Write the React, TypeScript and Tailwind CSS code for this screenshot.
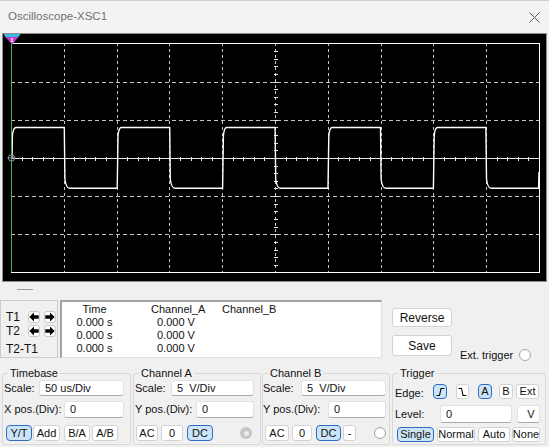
import clsx from "clsx";
import type { ReactNode } from "react";

// plot geometry, in page pixels
const X0 = 11;
const X1 = 539;
const Y0 = 43.3;
const Y1 = 272.5;
const DX = (X1 - X0) / 10;
const DY = (Y1 - Y0) / 6;
const CY = (Y0 + Y1) / 2;
const HI = 127.5;
const LO = 188.3;

const wavePath = () => {
	let d = `M12 ${CY} L12.4 136 Q13.2 ${HI} 16 ${HI}`;
	for (let k = 0; k < 5; k++) {
		const r = 11.8 + 105.4 * k;
		const f = r + 52.5;
		if (k > 0) d += ` L${r} ${LO} L${r + 0.8} 136 Q${r + 1.6} ${HI} ${r + 4} ${HI}`;
		d += ` L${f} ${HI} L${f + 0.6} 179 Q${f + 1.6} ${LO} ${f + 5.5} ${LO}`;
	}
	d += ` L538.6 ${LO} L539 172`;
	return d;
};

const Scope = () => {
	const px = (v: number) => Math.round(v) + 0.5;
	const cx = px(X0 + 5 * DX);
	const cyy = px(CY);
	const hTicks = Array.from({ length: 51 }, (_, i) => px(X0 + (i * DX) / 5));
	const vTicks = Array.from({ length: 31 }, (_, i) => px(Y0 + (i * DY) / 5));

	return (
		<svg width="543" height="247" viewBox="3 34 543 247" className="block">
			<g stroke="#c4c4c4" strokeWidth="1" shapeRendering="crispEdges">
				{Array.from({ length: 9 }, (_, i) => (
					<line key={`v${i}`} x1={px(X0 + (i + 1) * DX)} x2={px(X0 + (i + 1) * DX)} y1={Y0} y2={Y1} strokeDasharray="3 3" />
				))}
				{[1, 2, 4, 5].map((j) => (
					<line key={`h${j}`} x1={X0} x2={X1} y1={px(Y0 + j * DY)} y2={px(Y0 + j * DY)} strokeDasharray="4 3" />
				))}
			</g>
			<g stroke="#e6e6e6" strokeWidth="1" shapeRendering="crispEdges">
				<line x1={X0} x2={X1} y1={cyy} y2={cyy} />
				{hTicks.map((t) => (
					<line key={`ht${t}`} x1={t} x2={t} y1={cyy - 1.5} y2={cyy + 2.5} />
				))}
				{vTicks.map((t) => (
					<line key={`vt${t}`} x1={cx - 2} x2={cx + 2} y1={t} y2={t} />
				))}
			</g>
			<rect x={px(X0)} y={px(Y0)} width={Math.round(X1 - X0)} height={Math.round(Y1 - Y0)} fill="none" stroke="#ffffff" strokeWidth="1" shapeRendering="crispEdges" />
			<path d={wavePath()} fill="none" stroke="#ffffff" strokeWidth="1.4" />
			<line x1="11.5" x2="11.5" y1="43" y2="272" stroke="#3db54a" strokeWidth="1" shapeRendering="crispEdges" />
			<circle cx="11.5" cy={CY} r="3.2" fill="none" stroke="#9d8aae" strokeWidth="1" />
			<line x1="7.5" x2="15.5" y1={CY} y2={CY} stroke="#9d8aae" strokeWidth="1" />
			<polygon points="3.5,34 20.5,34 18.6,37 5.4,37" fill="#3cb8dc" />
			<polygon points="5.4,37 18.6,37 12,44.5" fill="#c23ac4" />
			<text x="12" y="41.8" fontSize="6" fill="#ffffff" textAnchor="middle" fontFamily="Liberation Sans, sans-serif" fontWeight="bold">
				1
			</text>
		</svg>
	);
};

type BtnProps = { children: ReactNode; on?: boolean; className?: string };

const Btn = ({ children, on, className }: BtnProps) => (
	<div
		className={clsx(
			"flex items-center justify-center border text-[11px] leading-none",
			on ? "bg-[#cce4f7] border-[#2d6cc0] rounded-[4px]" : "bg-white border-[#d3d3d3] rounded-[3px]",
			className,
		)}>
		{children}
	</div>
);

const Field = ({ children, className }: { children: ReactNode; className?: string }) => (
	<div className={clsx("flex items-center bg-white border border-[#e2e2e2] border-b-[#a9a9a9] rounded-[3px] pl-[5px] text-[11px] whitespace-pre", className)}>
		{children}
	</div>
);

const Radio = ({ disabled, className }: { disabled?: boolean; className?: string }) =>
	disabled ? (
		<div className={clsx("w-[12px] h-[12px] rounded-full bg-[#c5c5c5] flex items-center justify-center", className)}>
			<div className="w-[5px] h-[5px] rounded-full bg-[#ededed]" />
		</div>
	) : (
		<div className={clsx("w-[12px] h-[12px] rounded-full bg-white border border-[#a3a3a3]", className)} />
	);

const Arrow = ({ left }: { left?: boolean }) => (
	<div className="w-[12px] h-[12px] bg-white border border-[#c9c9c9] rounded-[3px] flex items-center justify-center">
		<svg width="10" height="10" viewBox="0 0 10 10">
			<path d={left ? "M0.3 5 L5 0.5 V3.3 H9.7 V6.7 H5 V9.5 Z" : "M9.7 5 L5 0.5 V3.3 H0.3 V6.7 H5 V9.5 Z"} fill="#000" />
		</svg>
	</div>
);

const Edge = ({ falling }: { falling?: boolean }) => (
	<svg width="9" height="10" viewBox="0 0 9 10">
		<path d={falling ? "M0.5 1.5 H3.5 L5 8.5 H8.5" : "M0.5 8.5 H3.5 L5 1.5 H8.5"} stroke="#000" fill="none" strokeWidth="1.1" />
	</svg>
);

const Group = ({ title, children, className }: { title: string; children: ReactNode; className?: string }) => (
	<fieldset className={clsx("border border-[#d8d8d8] rounded-[3px] h-[78px]", className)}>
		<legend className="ml-[5px] px-[2px] text-[11px] leading-[13px]">{title}</legend>
		{children}
	</fieldset>
);

const App = () => {
	return (
		<div className="w-[549px] h-[447px] overflow-hidden bg-[#f0f0f0] text-[#111] font-['Liberation_Sans',Arial,sans-serif]">
			<div className="h-[33px] bg-[#f3f3f3] border-t border-[#cfcfcf] flex items-center justify-between pl-[8px] pr-[9px]">
				<span className="text-[11.5px] text-[#707070]">Oscilloscope-XSC1</span>
				<svg width="11" height="11" viewBox="0 0 11 11">
					<path d="M0.5 0.5 L10.5 10.5 M10.5 0.5 L0.5 10.5" stroke="#5a5a5a" strokeWidth="1" />
				</svg>
			</div>

			<div className="mx-[2px] h-[249px] border border-[#8e8e8e] bg-black">
				<Scope />
			</div>

			<div className="h-[18px] pt-[7px] pl-[17px]">
				<div className="w-[16px] h-px bg-[#9a9a9a]" />
			</div>

			<div className="h-[58px] flex">
				<div className="w-[58px] h-full border border-[#cdcdcd] pl-[5px] pt-[10px] text-[12px]">
					<div className="h-[12px] flex items-center">
						<span className="w-[22px]">T1</span>
						<Arrow left />
						<div className="w-[4px]" />
						<Arrow />
					</div>
					<div className="mt-[2px] h-[12px] flex items-center">
						<span className="w-[22px]">T2</span>
						<Arrow left />
						<div className="w-[4px]" />
						<Arrow />
					</div>
					<div className="mt-[6px] h-[12px] flex items-center">T2-T1</div>
				</div>

				<div className="ml-[2px] w-[322px] h-full bg-white border-t-2 border-l-2 border-[#a3a3a3] border-r border-b border-r-[#e2e2e2] border-b-[#e2e2e2] text-[11px] leading-[13px] pt-[1px]">
					<div className="flex">
						<span className="w-[65px] text-center">Time</span>
						<span className="w-[95px] pl-[24px]">Channel_A</span>
						<span>Channel_B</span>
					</div>
					{[0, 1, 2].map((i) => (
						<div key={i} className="flex">
							<span className="w-[65px] text-center">0.000 s</span>
							<span className="w-[95px] pl-[30px]">0.000 V</span>
						</div>
					))}
				</div>

				<div className="ml-[10px] w-[60px] flex flex-col pt-[8px]">
					<Btn className="h-[19px] text-[12px]">Reverse</Btn>
					<Btn className="mt-[8px] h-[21px] text-[12px]">Save</Btn>
				</div>

				<div className="ml-[8px] mt-[49px] h-[12px] flex items-center text-[11px]">
					<span>Ext. trigger</span>
					<Radio className="ml-[6px]" />
				</div>
			</div>

			<div className="flex mt-[9px] pl-[2px] text-[11px]">
				<Group title="Timebase" className="w-[129px]">
					<div className="h-[16px] flex items-center pl-[1px] pr-[6px]">
						<span>Scale:</span>
						<Field className="ml-auto w-[85px] h-full">50 us/Div</Field>
					</div>
					<div className="mt-[5px] h-[17px] flex items-center pl-[1px] pr-[6px]">
						<span>X pos.(Div):</span>
						<Field className="ml-auto w-[60px] h-full">0</Field>
					</div>
					<div className="mt-[7px] h-[16px] flex">
						<Btn on className="ml-[3px] w-[26px]">Y/T</Btn>
						<Btn className="ml-[1px] w-[27px]">Add</Btn>
						<Btn className="ml-[4px] w-[26px]">B/A</Btn>
						<Btn className="ml-[2px] w-[26px]">A/B</Btn>
					</div>
				</Group>

				<Group title="Channel A" className="ml-[2px] w-[128px]">
					<div className="h-[16px] flex items-center pl-[1px] pr-[6px]">
						<span>Scale:</span>
						<Field className="ml-auto w-[83px] h-full">5  V/Div</Field>
					</div>
					<div className="mt-[5px] h-[17px] flex items-center pl-[1px] pr-[6px]">
						<span>Y pos.(Div):</span>
						<Field className="ml-auto w-[58px] h-full">0</Field>
					</div>
					<div className="mt-[7px] h-[16px] flex items-center">
						<Btn className="ml-[2px] w-[22px] h-full">AC</Btn>
						<Btn className="ml-[3px] w-[22px] h-full">0</Btn>
						<Btn on className="ml-[4px] w-[26px] h-full">DC</Btn>
						<Radio disabled className="ml-[27px]" />
					</div>
				</Group>

				<Group title="Channel B" className="ml-[1px] w-[128px]">
					<div className="h-[16px] flex items-center pr-[3px]">
						<span>Scale:</span>
						<Field className="ml-auto w-[85px] h-full">5  V/Div</Field>
					</div>
					<div className="mt-[5px] h-[17px] flex items-center pr-[3px]">
						<span>Y pos.(Div):</span>
						<Field className="ml-auto w-[58px] h-full">0</Field>
					</div>
					<div className="mt-[7px] h-[16px] flex items-center">
						<Btn className="ml-[2px] w-[24px] h-full">AC</Btn>
						<Btn className="ml-[3px] w-[20px] h-full">0</Btn>
						<Btn on className="ml-[4px] w-[25px] h-full">DC</Btn>
						<Btn className="ml-[2px] w-[13px] h-full">-</Btn>
						<Radio className="ml-[18px]" />
					</div>
				</Group>

				<Group title="Trigger" className="ml-[2px] w-[154px]">
					<div className="mt-[4px] h-[15px] flex items-center pl-[2px]">
						<span className="w-[38px] pt-[3px]">Edge:</span>
						<Btn on className="w-[14px] h-full">
							<Edge />
						</Btn>
						<Btn className="ml-[9px] w-[13px] h-full">
							<Edge falling />
						</Btn>
						<Btn on className="ml-[9px] w-[14px] h-full">A</Btn>
						<Btn className="ml-[7px] w-[14px] h-full">B</Btn>
						<Btn className="ml-[3px] w-[23px] h-full">Ext</Btn>
					</div>
					<div className="mt-[6px] h-[18px] flex items-center pl-[2px]">
						<span className="w-[45px]">Level:</span>
						<Field className="w-[72px] h-full">0</Field>
						<Field className="ml-[5px] w-[23px] h-full justify-center pl-0">V</Field>
					</div>
					<div className="mt-[4px] h-[15px] flex">
						<Btn on className="ml-[4px] w-[37px]">Single</Btn>
						<Btn className="ml-[3px] w-[38px]">Normal</Btn>
						<Btn className="ml-[3px] w-[32px]">Auto</Btn>
						<Btn className="ml-[2px] w-[28px]">None</Btn>
					</div>
				</Group>
			</div>
		</div>
	);
};

export default App;
